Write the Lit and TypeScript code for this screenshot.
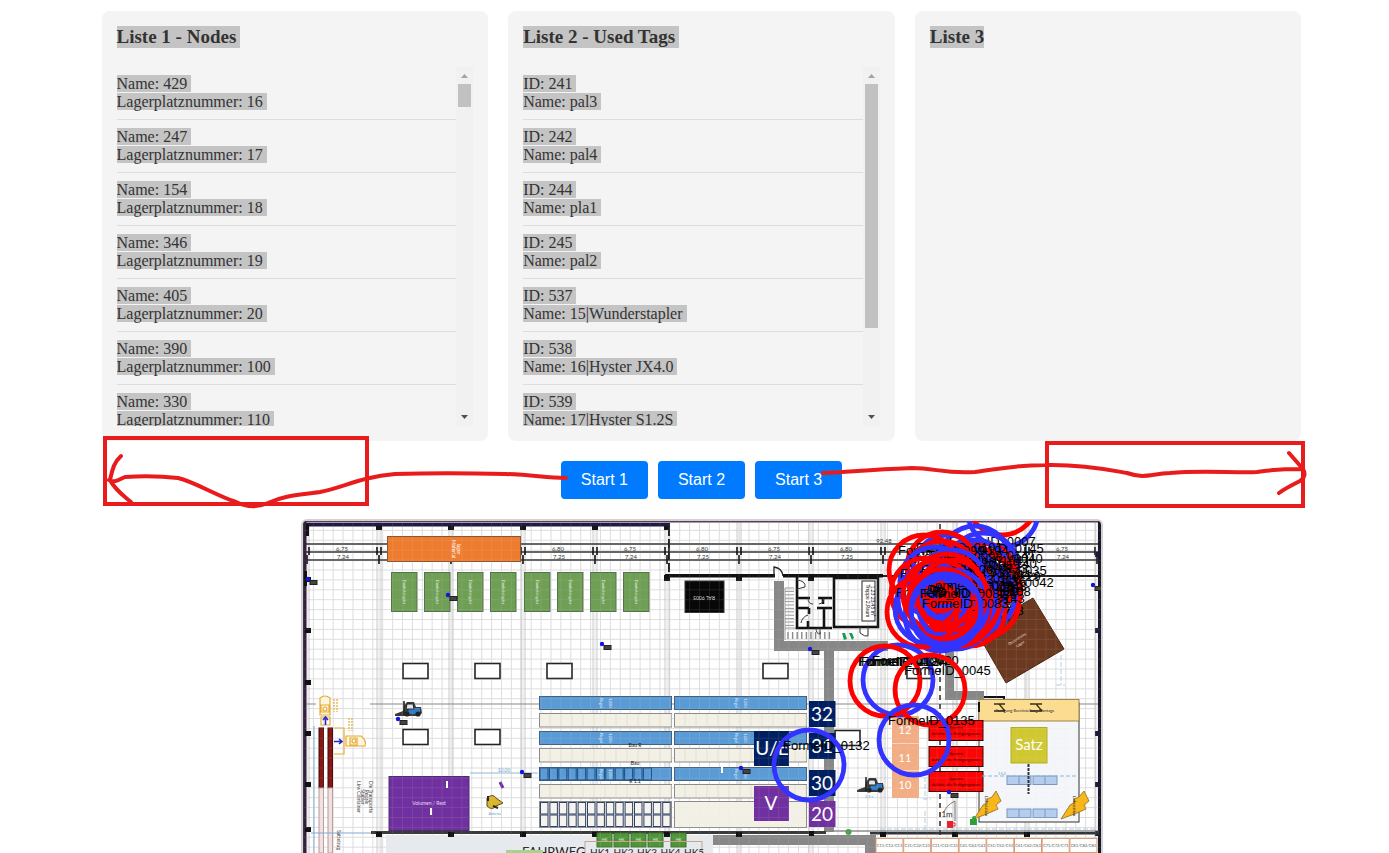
import { LitElement, html, svg, css } from "lit";
import { customElement, property } from "lit/decorators.js";

type Row = [string, string];

const NODES: Row[] = [
  ["429", "16"],
  ["247", "17"],
  ["154", "18"],
  ["346", "19"],
  ["405", "20"],
  ["390", "100"],
  ["330", "110"],
].map(([n, l]) => [`Name: ${n}`, `Lagerplatznummer: ${l}`] as Row);

const TAGS: Row[] = [
  ["241", "pal3"],
  ["242", "pal4"],
  ["244", "pla1"],
  ["245", "pal2"],
  ["537", "15|Wunderstapler"],
  ["538", "16|Hyster JX4.0"],
  ["539", "17|Hyster S1.2S"],
].map(([i, n]) => [`ID: ${i}`, `Name: ${n}`] as Row);

@customElement("list-card")
class ListCard extends LitElement {
  @property() heading = "";
  @property({ attribute: false }) rows: Row[] = [];
  @property({ type: Number }) thumb = 0;

  static styles = css`
    :host {
      display: block;
      box-sizing: border-box;
      padding: 15px;
      border-radius: 8px;
      background: #f4f4f4;
      color: #333;
      font-family: "Liberation Serif", "Times New Roman", serif;
    }
    h3 {
      margin: 0 0 19px;
      font-size: 19px;
      line-height: 22px;
    }
    .mark {
      background: #c4c4c4;
      padding-right: 4px;
    }
    h3 .mark {
      display: inline-block;
    }
    h3 .tight {
      padding-right: 0;
    }
    .scroller {
      display: flex;
      height: 359px;
    }
    ul {
      flex: 1;
      margin: 0;
      padding: 0;
      list-style: none;
      overflow-y: auto;
      scrollbar-width: none;
      font-size: 16px;
      line-height: 18px;
    }
    li {
      padding: 8px 0;
      border-bottom: 1px solid #ddd;
    }
    .bar {
      display: flex;
      flex-direction: column;
      width: 17px;
      background: #f1f1f1;
    }
    .bar svg {
      flex: none;
      width: 17px;
      height: 17px;
    }
    .track {
      flex: 1;
      padding: 0 2px;
    }
    .thumb {
      background: #c1c1c1;
    }
  `;

  render() {
    return html`
      <h3><span class="mark ${this.rows.length ? "" : "tight"}">${this.heading}</span></h3>
      ${this.rows.length
        ? html`<div class="scroller">
            <ul>
              ${this.rows.map(
                ([a, b]) => html`<li>
                  <span class="mark">${a}</span><br /><span class="mark">${b}</span>
                </li>`
              )}
            </ul>
            <div class="bar" aria-hidden="true">
              <svg viewBox="0 0 17 17"><path d="M5 11h7L8.500 7z" fill="#a3a3a3" /></svg>
              <div class="track">
                <div class="thumb" style="height:${this.thumb}%"></div>
              </div>
              <svg viewBox="0 0 17 17"><path d="M5 6h7L8.500 10z" fill="#505050" /></svg>
            </div>
          </div>`
        : ""}
    `;
  }
}

const RED = "#ff0000";
const BLUE = "#3333ff";

const box = (x: number, y: number, w: number, h: number, fill: string, stroke = "none", sw = 1) =>
  svg`<rect x=${x} y=${y} width=${w} height=${h} fill=${fill} stroke=${stroke} stroke-width=${sw} />`;

const label = (x: number, y: number, size: number, text: string, fill = "#222", turn = 0) =>
  svg`<text x=${x} y=${y} font-size=${size} fill=${fill} text-anchor="middle" transform="rotate(${turn} ${x} ${y})">${text}</text>`;

const COLUMNS = [307, 379, 451, 523, 595, 667, 739, 811, 883, 955, 1027, 1097];

/* Position, colour and number of every located tag, in paint order. */
const TAG_NODES: [number, number, string, string][] = [
  [1002, 500, RED, ""],
  [1003, 512, BLUE, ""],
  [955, 621, "none", "0068"],
  [950, 636, "none", "0066"],
  [959, 633, "none", "0064"],
  [963, 630, "none", "0078"],
  [957, 627, "none", "0063"],
  [960, 623, "none", "0062"],
  [956, 617, "none", "0061"],
  [962, 614, "none", "0060"],
  [975, 561, BLUE, "0007"],
  [983, 568, BLUE, "0145"],
  [982, 578, RED, "0040"],
  [975, 575, BLUE, "0141"],
  [976, 583, RED, "0140"],
  [986, 590, RED, "0035"],
  [984, 602, RED, ""],
  [993, 602, "none", "0042"],
  [980, 596, BLUE, "0129"],
  [966, 606, BLUE, "0048"],
  [970, 611, RED, "0108"],
  [967, 588, RED, "0133"],
  [970, 594, BLUE, "0144"],
  [965, 601, RED, "0136"],
  [962, 607, RED, "0138"],
  [956, 614, BLUE, "0086"],
  [964, 618, "none", "0143"],
  [958, 611, RED, "0139"],
  [962, 580, BLUE, "0104"],
  [958, 592, RED, "0127"],
  [961, 598, BLUE, "0118"],
  [955, 606, RED, "0115"],
  [948, 570, BLUE, "0104"],
  [942, 567, RED, "0101"],
  [924, 570, RED, "0099"],
  [942, 576, RED, "0098"],
  [935, 582, BLUE, "0096"],
  [952, 585, BLUE, "0095"],
  [926, 593, RED, "0094"],
  [933, 599, BLUE, "0093"],
  [930, 609, BLUE, ""],
  [940, 616, BLUE, ""],
  [922, 612, RED, "0091"],
  [947, 589, RED, "0089"],
  [938, 595, RED, ""],
  [953, 605, BLUE, "0088"],
  [952, 595, RED, ""],
  [946, 613, BLUE, "0082"],
  [948, 623, "none", "0083"],
  [943, 604, RED, ""],
  [946, 609, BLUE, ""],
  [898, 680, BLUE, "0020"],
  [885, 681, RED, "0184"],
  [884, 681, "none", "0127"],
  [887, 681, "none", "0134"],
  [930, 690, RED, "0045"],
  [914, 740, BLUE, "0135"],
  [809, 765, BLUE, "0132"],
];

const MARKERS = [
  [308, 579], [448, 595], [602, 644], [810, 649], [1093, 585],
  [398, 719], [522, 772], [741, 768], [949, 792],
];

@customElement("floor-plan")
class FloorPlan extends LitElement {
  static styles = css`
    :host {
      display: block;
      box-sizing: border-box;
      border: 2px solid #d2d2d2;
      border-bottom: 0;
      border-radius: 6px 6px 0 0;
      overflow: hidden;
      background: #fff;
    }
    svg {
      display: block;
      width: 100%;
      height: auto;
      font-family: Lato, "Noto Sans", sans-serif;
    }
    .tag {
      font-family: "Liberation Sans", Arial, sans-serif;
      font-size: 13px;
    }
  `;

  structure() {
    return svg`
      ${COLUMNS.map((x) => svg`<path d="M${x - 2} 522V853M${x + 2} 522V853" stroke="#bdbdbd" stroke-width="0.800" /><path d="M${x} 522V853" stroke="#e2e2e2" />`)}
      <path d="M306 544H1098M306 552H1098M306 560H1098" stroke="#333" stroke-width="1.300" />
      ${COLUMNS.map((x) => svg`<path d="M${x - 2} 547v8M${x + 2} 547v8M${x} 555v9" stroke="#111" stroke-width="1.600" />`)}
      ${COLUMNS.slice(0, 11).map((x, i) => svg`${label(x + 35, 551, 6, i % 2 ? "6,80" : "6,75", "#333")}${label(x + 36, 559, 6, i % 2 ? "7,25" : "7,24", "#333")}`)}
      ${label(884, 543, 6, "92,48", "#333")}
      ${box(303, 521, 798, 1.5, "#5b3a56")}
      ${box(303, 523, 367, 3.5, "#1f1b46")}
      ${box(303, 521, 3.5, 332, "#33203a")}
      ${box(306, 524, 3, 12, "#111")}
      ${box(1098, 521, 3.5, 332, "#1c1728")}
      ${COLUMNS.slice(1, 6).map((x) => box(x - 3, 526, 6, 4, "#151515"))}
      ${[579, 630, 682, 733, 784, 829].map((y) => box(305, y - 2, 6, 5, "#111"))}
      ${[554, 630, 733, 784, 833].map((y) => box(1095, y - 2, 5, 5, "#1c1c3a"))}
      ${box(304, 571, 3, 15, "#111")}
      <path d="M306 704H316M370 704H1098" stroke="#888" stroke-width="1.200" />

      <path d="M669 527v50" stroke="#222" stroke-width="2" stroke-dasharray="9 3" />
      ${box(665, 574, 110, 3.5, "#111")}
      ${box(783, 574, 100, 3.5, "#111")}
      ${box(883, 575, 216, 2, "#222")}
      ${[667, 739, 811, 955].map((x) => box(x - 3, 575, 6, 6, "#111"))}
      <path d="M774 577v-10q8 1 9 9" fill="none" stroke="#222" stroke-width="1.300" />

      <path d="M774 581h10v60h104v10H774z" fill="#878787" />
      ${box(824, 651, 10, 181, "#878787")}
      <path d="M945 645h9v46h30v9h-39z" fill="#878787" />
      <path d="M713 835h162v18h-10v-8H713z" fill="#878787" />
      ${box(865, 835, 11, 18, "#878787")}

      ${Array.from({ length: 12 }, (_, i) => svg`<path d="M785 ${588 + i * 3.4}h9" stroke="#999" />`)}
      ${Array.from({ length: 10 }, (_, i) => svg`<path d="M${788 + i * 4.6} 632v7" stroke="#888" stroke-width="1.400" />`)}
      <path d="M785 640V588M785 628H796" stroke="#999" fill="none" />
      <path d="M797 577v51h35M796 598h14M818 598h14M796 608h13M817 608h15M809 608v6M823 598v6M808 621v7M824 608v20" fill="none" stroke="#111" stroke-width="2.600" />
      <path d="M797 580q9 1 8 7l-8 2M808 598q0 6 5 6M824 598q0 5 -5 6M801 623q1 -6 7 -8M816 628q0 6 4 6v-6" fill="none" stroke="#333" />
      ${box(834, 578, 44, 49, "none", "#111", 2.6)}
      ${box(862, 581, 13, 40, "#fff", "#222")}
      ${label(866, 601, 5, "Treppe 2.Raum", "#111", 90)}
      ${label(871, 601, 5, "1.23  23.45 m²", "#111", 90)}
      <path d="M860 627v6q5 4 8 3v-9" fill="none" stroke="#333" />
      <path d="M842 633l3 0 2 6-3 1zM849 633l3 0 2 5-2 2z" fill="#1c9a50" />
      <path d="M940 524V853" stroke="#333" stroke-width="1.600" stroke-dasharray="5 4" />
    `;
  }

  machines() {
    return svg`
      ${box(387.5, 536.5, 133, 25, "#ee7c2e", "#8a5530")}
      ${label(452, 549, 5, "Material", "#fff", 90)}${label(457, 549, 5, "lager", "#fff", 90)}
      ${[391, 424, 457, 490, 524, 557, 590, 623].map((x) => svg`
        ${box(x + 0.5, 572.5, 25.5, 39, "#6f9e55", "#56724a")}
        ${label(x + 12, 592, 4, "Dunkelstapler", "#e6f0e0", 90)}`)}
      ${box(685, 581, 39, 31.5, "#070707", "#333")}
      ${label(704, 596, 5, "RAL 9005", "#ddd", 180)}
      ${[[402, 663], [474, 663], [546, 663], [762, 663], [906, 663], [402, 729], [474, 729], [834, 730]].map(([x, y]) =>
        box(x + 1, y + 0.5, 25, 15, "#fff", "#222", 1.6))}
      <path d="M1033 598l31 51-58 34-30-52z" fill="#6b3820" stroke="#4b2512" />
      ${label(1018, 640, 4, "Dezentrales", "#e6d5cc", -32)}${label(1021, 645, 4, "Lager", "#e6d5cc", -32)}
      ${box(389, 776.5, 80, 54, "#7030a0", "#4a2a70")}
      ${label(429, 805, 5, "Volumen / Rest", "#e9d9f3")}
      <path d="M447 781v7M431 808v7" stroke="#fff" stroke-width="2" />
      <path d="M500 782l3 6" stroke="#7030a0" stroke-width="3" />
      <path d="M470 773H538" stroke="#8fb6d8" />${label(504, 772, 5, "10,00", "#6c9cc8")}
      <path d="M487 798q6-5 9 0l7 5-7 3q-4 5-9 0z" fill="#d9b62c" stroke="#5a4a12" /><path d="M488 796v5M493 806l5 2" stroke="#222" stroke-width="2" />
      ${label(495, 815, 4, "Ameise", "#6c9cc8")}
    `;
  }

  trucks() {
    const lift = (x: number, y: number) => svg`<g transform="translate(${x} ${y})">
      <path d="M-13 6l8-3 1-5 3-4h7l2 5 5 0 1 6-3 3H-13z" fill="#3a3a3a" />
      <path d="M1 0h11v6H0z" fill="#2f7cc4" />
      <path d="M-1-4h6l1 5h-8z" fill="#dfe8ef" stroke="#222" />
      <path d="M-4-7V7" stroke="#222" stroke-width="1.600" />
      <circle cx="-1" cy="6" r="2.600" fill="#222" /><circle cx="10" cy="6" r="2.600" fill="#222" />
    </g>`;
    return svg`
      ${lift(408, 708)}${lift(870, 784)}
      ${label(869, 798, 4, "2,5 t", "#6c9cc8")}
      <g fill="#fff6df" stroke="#e5ac35" stroke-width="1.200">
        <path d="M320 698q5-4 10 0v17h-10zM321 705h8v7h-8z" />
        <path d="M346 736h15q6 5 4 10h-19zM350 738h7v7h-7z" />
        <circle cx="325" cy="709" r="2" /><circle cx="354" cy="741" r="2" />
        <path d="M321 717h9v8h-9zM334 728h10v26h-10" fill="none" />
        <path d="M334 699v13M337 699v13M349 718v13M352 718v13" stroke-dasharray="2 1" />
      </g>
      <path d="M325.500 725v-7M323 720l2.500-3 2.500 3M334 741.500h7M339 739l3 2.500-3 2.500" fill="none" stroke="#2222cc" stroke-width="1.600" />
      ${box(319, 728, 4.5, 60, "#8c1414", "#3d0a0a")}${box(328, 728, 4.5, 60, "#8c1414", "#3d0a0a")}
      ${box(319, 788, 4.5, 65, "#f1e1e1", "#b99")}${box(328, 788, 4.5, 65, "#f1e1e1", "#b99")}
      <path d="M314 726V853M311 833H371" stroke="#7fa9d0" />
      ${["Die Transporte", "Regale", "Stapler", "Lkw Container"].map((t, i) => label(369 - i * 4, 797, 5, t, "#444", 90))}
      ${label(337, 840, 5, "Sattelzug", "#444", 90)}
    `;
  }

  shelves() {
    const blue = [696, 731, 767];
    const cream = [713, 748, 784];
    return svg`
      ${[539, 674].map((x) => svg`
        ${cream.map((y) => svg`${box(x + 0.5, y + 0.5, 132, 13.5, "#f3f0e6", "#8a8a8a")}
          ${Array.from({ length: 12 }, (_, i) => svg`<path d="M${x + 11 * (i + 1)} ${y + 1}v12" stroke="#e4e0d3" />`)}`)}
        ${blue.map((y) => svg`${box(x + 0.5, y + 0.5, 132, 13, "#5a9bd5", "#42617f")}
          ${label(x + 61, y + 7, 4, "Regal", "#e8f2fb", 90)}${label(x + 70, y + 7, 4, "1200", "#e8f2fb", 90)}`)}
        ${box(x + 0.5, 801.5, 132, 26, "#f3f0e6", "#8a8a8a")}`)}
      ${Array.from({ length: 12 }, (_, i) => box(540 + i * 9.4, 768, 8, 12, "none", "#1d4f80"))}
      ${Array.from({ length: 14 }, (_, i) => svg`${box(540.5 + i * 9.4, 802.500, 7.500, 11.500, "#f6f4ee", "#2d3f66")}${box(540.5 + i * 9.4, 815, 7.500, 11.500, "#f6f4ee", "#2d3f66")}`)}
      ${[[747, "Bau R"], [765, "Bau"], [783, "R 1.1"]].map(([y, t]) => label(635, y as number, 5, t as string, "#111"))}
      <path d="M722 766v7" stroke="#fff" stroke-width="2" />

      ${box(386, 835, 327, 18, "#e6eaee")}
      ${box(371, 831, 455, 3, "#3a3a3a")}${box(834, 830.5, 265, 1, "#555")}${box(870, 832, 229, 2.5, "#333")}
      ${COLUMNS.slice(1, 11).map((x) => (x === 811 ? box(809, 831, 5, 5, "#111") : box(x - 3, 832, 6, 5, "#111")))}
      ${[597, 614, 631, 648, 671].map((x) => svg`${box(x, 833, 15, 14, "#4f9438", "#3c702a")}${label(x + 7.5, 841, 4, "HK", "#dfeeda")}`)}
      ${box(585, 841.5, 117, 20, "none", "#c8a488")}
      <text x="522" y="857" font-size="13" fill="#222">FAHRWEG</text>
      ${["HK1", "HK2", "HK3", "HK4", "HK5"].map((t, i) => svg`<text x=${590 + i * 23.5} y="856" font-size="10" fill="#222">${t}</text>`)}
      ${box(506, 850, 37, 5, "#a9d18e")}
      ${Array.from({ length: 8 }, (_, i) => svg`
        ${box(876 + i * 27.7, 838.5, 27, 14, "#fff", "#dc9a72")}
        ${label(889.5 + i * 27.7, 847, 4, `C${i + 1}1/C${i + 1}2/C${i + 1}3`, "#555")}`)}
    `;
  }

  stations() {
    return svg`
      ${box(754, 731, 35, 35, "#001f60")}${label(772, 755, 19, "U/E", "#fff")}
      ${box(754, 786, 35, 35, "#7030a0")}${label(771, 810, 19, "V", "#fff")}
      ${[["32", 701], ["31", 733], ["30", 770], ["20", 801]].map(([t, y]) => svg`
        ${box(809, y as number, 26.500, 26, t === "20" ? "#7030a0" : "#001f60")}
        ${label(822, (y as number) + 20, 19, t as string, "#fff")}`)}
      ${["12", "11", "10"].map((t, i) => svg`${box(892, 716 + i * 27.5, 27, 27, "#f2ad84")}${label(905, 734 + i * 27.5, 11, t, "#fff")}`)}
      ${box(979, 703, 100, 119, "#f5f6fa", "#333")}
      ${box(979, 699.5, 100, 21.5, "#fcdc8e", "#9c8448")}
      <path d="M979 702v10M984 697h20v2" stroke="#111" stroke-width="2" fill="none" />
      <path d="M994 704h11M994 711h11M999 704l6 7M1030 704h12M1030 711h12M1036 704l6 7" stroke="#3a2f10" stroke-width="1.300" />
      ${label(1025, 712, 4, "Fertigung Bereitstellung Montage", "#222")}
      ${[720, 746, 771].map((y) => svg`${box(929, y + 0.5, 54, 20, "#fb0505", "#3a0000")}
        ${label(956, y + 9, 4, "Sperren", "#300")}${label(956, y + 15, 4, "defekte alte Fertigungsware", "#300")}`)}
      ${box(1011, 727.5, 36, 35.500, "#d0c830", "#b3ac22")}${label(1029, 750, 15, "Satz", "#fff")}
      ${[776, 809].map((y) => [1007, 1033].map((x) => svg`${box(x, y, 24, 8.500, "#b4cdee", "#7795bf")}<path d="M${x + 12} ${y}v8" stroke="#7795bf" />`))}
      <path d="M982 776H1076" stroke="#8fb6d8" stroke-dasharray="4 2" />${label(1002, 775, 4, "15,0", "#6c9cc8")}
      <path d="M1028.500 764V794" stroke="#333" stroke-width="2" stroke-dasharray="3 1" />
      <path d="M996 791l5 10-5 4 2 4-9 4-15 6 9-14 4-2 0-4 5-2zM1084 791l5 10-5 4 2 4-9 4-16 6 9-14 4-2 0-4 5-2z" fill="#f8b617" stroke="#8a6a1a" stroke-width="0.800" />
      ${label(985, 806, 4, "Ladestation", "#111", 90)}${label(1073, 806, 4, "Ladestation", "#111", 90)}
      ${box(947, 821, 6, 7, "#e3202c")}<path d="M953 823h2v3h-2" fill="none" stroke="#e3202c" />
      ${box(970, 819, 7, 6, "#2f9e3c")}<circle cx="974" cy="818" r="2" fill="#2f9e3c" /><circle cx="848.500" cy="832" r="3" fill="#3fa648" />
      ${label(947, 817, 8, "1m", "#222")}
      <path d="M955 801v20M955 801q-10 5 -11 12" fill="none" stroke="#777" />
      <path d="M925 777v22M923 799h8M925 811v20M880 829H1096M1061 655v30M1056 685h9" fill="none" stroke="#b5cfe6" stroke-dasharray="5 2" />
    `;
  }

  render() {
    return html`<svg viewBox="303 521 798 332" role="img" aria-label="Hallenplan">
      <defs>
        <pattern id="grid" width="9.900" height="9.900" patternUnits="userSpaceOnUse" x="303" y="520">
          <path d="M0 0.500H10M0.500 0V10" stroke="#dcdcdc" stroke-width="0.900" fill="none" />
        </pattern>
      </defs>
      <rect x="303" y="521" width="798" height="332" fill="#fff" />
      <rect x="303" y="521" width="798" height="332" fill="url(#grid)" />
      ${this.structure()} ${this.machines()} ${this.trucks()} ${this.shelves()} ${this.stations()}
      <rect x="303" y="521" width="798" height="332" fill="url(#grid)" opacity="0.120" />
      ${MARKERS.map(([x, y]) => svg`${box(x + 2, y + 1.5, 7, 4, "#444", "#222")}<circle cx=${x} cy=${y} r="2.200" fill="#1414dd" />`)}
      ${TAG_NODES.map(([x, y, c, n]) => svg`
        <circle cx=${x} cy=${y} r="35" fill="none" stroke=${c} stroke-width="4.800" />
        ${n ? svg`<text class="tag" x=${x - 26} y=${y - 15}>FormeID_${n}</text>` : ""}`)}
    </svg>`;
  }
}

@customElement("app-root")
class AppRoot extends LitElement {
  static styles = css`
    :host {
      display: block;
      box-sizing: border-box;
      padding: 11px 0 0 14px;
      background: #fff;
      overflow: hidden;
    }
    main {
      display: flex;
      flex-direction: column;
      gap: 20px;
      max-width: 1200px;
      margin: 0 auto;
    }
    .lists {
      display: grid;
      grid-template-columns: repeat(3, minmax(0, 1fr));
      gap: 20px;
    }
    .actions {
      position: relative;
      display: flex;
      justify-content: center;
      gap: 10px;
    }
    button {
      padding: 10px 20px;
      border: 0;
      border-radius: 4px;
      background: #007bff;
      color: #fff;
      font: 16px/18px "Liberation Sans", Arial, sans-serif;
      cursor: pointer;
    }
    .ink {
      position: absolute;
      left: 0;
      top: -31px;
      width: 100%;
      height: 84px;
      overflow: visible;
      pointer-events: none;
    }
    floor-plan {
      width: 100%;
      max-width: 802px;
      align-self: center;
    }
  `;

  render() {
    return html`<main>
      <section class="lists">
        <list-card heading="Liste 1 - Nodes" .rows=${NODES} thumb="7"></list-card>
        <list-card heading="Liste 2 - Used Tags" .rows=${TAGS} thumb="75"></list-card>
        <list-card heading="Liste 3"></list-card>
      </section>
      <div class="actions">
        <button type="button">Start 1</button>
        <button type="button">Start 2</button>
        <button type="button">Start 3</button>
        <svg class="ink" viewBox="102 430 1200 84" fill="none" stroke="#e81c1c" stroke-width="4" stroke-linecap="round" stroke-linejoin="round" aria-hidden="true">
          <g stroke-linejoin="miter">
            <rect x="105" y="438" width="262" height="66" />
            <rect x="1047" y="443" width="256" height="63" />
          </g>
          <path d="M566 478C545 478 535 475 505 474C470 473 425 473 395 474C360 477 345 487 320 492C300 495 285 495 268 503Q252 510 236 502C215 495 195 482 178 478C160 476 140 476 125 477C118 480 115 483 109 480M121 456C113 463 112 472 110 480C115 490 124 496 131 502" />
          <path d="M823 473C850 472 880 469 912 468C935 468 945 474 975 472C1000 469 1015 465 1045 465C1085 464 1115 471 1127 473C1145 479 1150 474 1170 473C1200 470 1235 473 1257 472C1275 469 1285 469 1303 469M1289 453L1303 469Q1307 476 1300 481C1290 486 1284 489 1279 493" />
        </svg>
      </div>
      <floor-plan></floor-plan>
    </main>`;
  }
}
